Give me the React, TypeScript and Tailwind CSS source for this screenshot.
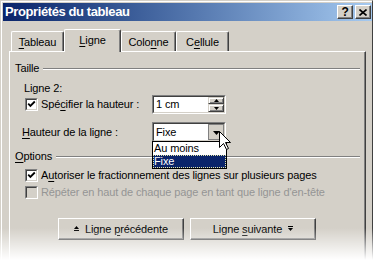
import type { ReactNode } from "react";

function U({ children }: { children: ReactNode }) {
  return <span className="underline decoration-1 underline-offset-[2px]">{children}</span>;
}

function Checkbox({ checked, disabled }: { checked?: boolean; disabled?: boolean }) {
  return (
    <div className="h-[13px] w-[13px] shrink-0 border border-t-[#808080] border-l-[#808080] border-b-white border-r-white">
      <div className={`h-full w-full border border-t-[#404040] border-l-[#404040] border-b-[#d4d0c8] border-r-[#d4d0c8] ${disabled ? "bg-[#d4d0c8]" : "bg-white"}`}>
        {checked && (
          <svg width="9" height="9" viewBox="0 0 9 9" className="block">
            <path d="M1.2 3.6 L3.4 5.9 L7.8 1.5" stroke="#000" strokeWidth="1.8" fill="none" />
          </svg>
        )}
      </div>
    </div>
  );
}

function Arrow({ up }: { up?: boolean }) {
  return (
    <svg width="5" height="3" viewBox="0 0 5 3" className="block">
      <path d={up ? "M2.5 0 L5 3 L0 3 Z" : "M0 0 L5 0 L2.5 3 Z"} fill="#000" />
    </svg>
  );
}

function GroupTitle({ children }: { children: ReactNode }) {
  return (
    <div className="flex h-[13px] items-center">
      <span className="leading-[13px]">{children}</span>
      <div className="ml-[4px] h-[2px] flex-1 border-t border-b border-t-[#808080] border-b-white" />
    </div>
  );
}

export default function App() {
  return (
    <div className="relative h-[260px] w-[375px] overflow-hidden bg-white font-['Liberation_Sans',Arial,sans-serif] text-[11px] leading-[13px] tracking-[-0.12px] text-black">
      <div className="h-[300px] w-[373px] border-t border-l border-r border-t-[#d4d0c8] border-l-[#d4d0c8] border-r-[#404040] bg-[#d4d0c8]">
        <div className="h-full border-t border-l border-white pt-px pl-px">
          {/* title bar */}
          <div className="flex h-[18px] items-center bg-linear-to-r from-[#0a246a] to-[#a6caf0] pr-px pl-[2px]">
            <span className="flex-1 text-[13px] leading-[14px] font-bold tracking-[-0.4px] text-white">Propriétés du tableau</span>
            <div className="flex h-[14px] w-[16px] items-center justify-center border border-t-white border-l-white border-b-[#404040] border-r-[#404040] bg-[#d4d0c8] shadow-[inset_-1px_-1px_0_#808080]">
              <span className="text-[12px] leading-[12px] font-bold">?</span>
            </div>
            <div className="ml-[2px] flex h-[14px] w-[16px] items-center justify-center border border-t-white border-l-white border-b-[#404040] border-r-[#404040] bg-[#d4d0c8] shadow-[inset_-1px_-1px_0_#808080]">
              <svg width="8" height="7" viewBox="0 0 8 7" className="block">
                <path d="M0.5 0.5 L7.5 6.5 M7.5 0.5 L0.5 6.5" stroke="#000" strokeWidth="1.6" />
              </svg>
            </div>
          </div>

          {/* body */}
          <div className="mr-[6px] ml-[6px] pt-[8px]">
            {/* tabs */}
            <div className="flex h-[22px] items-end pl-[2px]">
              <div className="flex h-[20px] w-[53px] justify-center rounded-t-[2px] border-t border-l border-r border-t-white border-l-white border-r-[#404040] pt-[4px] shadow-[inset_-1px_0_0_#808080]">
                <span><U>T</U>ableau</span>
              </div>
              <div className="relative z-10 -mb-px flex h-[23px] w-[57px] justify-center rounded-t-[2px] border-t border-l border-r border-t-white border-l-white border-r-[#404040] bg-[#d4d0c8] pt-[4px] shadow-[inset_-1px_0_0_#808080]">
                <span><U>L</U>igne</span>
              </div>
              <div className="flex h-[20px] w-[55px] justify-center rounded-t-[2px] border-t border-l border-r border-t-white border-l-white border-r-[#404040] pt-[4px] shadow-[inset_-1px_0_0_#808080]">
                <span>Colo<U>n</U>ne</span>
              </div>
              <div className="flex h-[20px] w-[53px] justify-center rounded-t-[2px] border-t border-l border-r border-t-white border-l-white border-r-[#404040] pt-[4px] shadow-[inset_-1px_0_0_#808080]">
                <span>C<U>e</U>llule</span>
              </div>
            </div>

            {/* panel */}
            <div className="h-[240px] border-t border-l border-r border-t-white border-l-white border-r-[#404040] pr-[5px] pl-[5px] shadow-[inset_-1px_0_0_#808080]">
              <div className="pt-[10px]">
                <GroupTitle>Taille</GroupTitle>
              </div>
              <div className="mt-[7px] ml-[9px] h-[13px]">Ligne 2:</div>

              <div className="ml-[10px] flex h-[19px] items-center">
                <div className="flex w-[127px] items-center gap-[3px]">
                  <Checkbox checked />
                  <span>Spé<U>c</U>ifier la hauteur :</span>
                </div>
                <div className="h-[19px] w-[74px] border border-t-[#808080] border-l-[#808080] border-b-white border-r-white">
                  <div className="flex h-full border border-t-[#404040] border-l-[#404040] border-b-[#d4d0c8] border-r-[#d4d0c8] bg-white">
                    <span className="flex flex-1 items-center pl-[2px]">1 cm</span>
                    <div className="flex w-[16px] flex-col">
                      <div className="flex h-[7px] items-center justify-center border border-t-[#d4d0c8] border-l-[#d4d0c8] border-b-[#404040] border-r-[#404040] bg-[#d4d0c8] shadow-[inset_1px_1px_0_#fff,inset_-1px_-1px_0_#808080]">
                        <Arrow up />
                      </div>
                      <div className="flex h-[8px] items-center justify-center border border-t-[#d4d0c8] border-l-[#d4d0c8] border-b-[#404040] border-r-[#404040] bg-[#d4d0c8] shadow-[inset_1px_1px_0_#fff,inset_-1px_-1px_0_#808080]">
                        <Arrow />
                      </div>
                    </div>
                  </div>
                </div>
              </div>

              <div className="mt-[8px] ml-[7px] flex h-[20px] items-center">
                <span className="w-[130px]"><U>H</U>auteur de la ligne :</span>
                <div className="relative h-[20px] w-[74px] border border-t-[#808080] border-l-[#808080] border-b-white border-r-white">
                  <div className="flex h-full border border-t-[#404040] border-l-[#404040] border-b-[#d4d0c8] border-r-[#d4d0c8] bg-white">
                    <span className="flex flex-1 items-center pl-[2px]">Fixe</span>
                    <div className="flex w-[16px] items-center justify-center border border-[#808080] bg-[#d4d0c8] pt-px pl-px">
                      <svg width="7" height="4" viewBox="0 0 7 4" className="block">
                        <path d="M0 0 L7 0 L3.5 4 Z" fill="#000" />
                      </svg>
                    </div>
                  </div>
                  {/* open list */}
                  <div className="absolute top-full -left-px z-20 w-[75px] border border-black bg-white">
                    <div className="h-[13px] pl-px leading-[13px]">Au moins</div>
                    <div className="h-[13px] border border-dotted border-[#e8e8a8] bg-[#0a246a] leading-[11px] text-white">Fixe</div>
                  </div>
                </div>
              </div>

              <div className="mt-[8px]">
                <GroupTitle><U>O</U>ptions</GroupTitle>
              </div>
              <div className="mt-[6px] ml-[10px] flex h-[13px] items-center gap-[3px]">
                <Checkbox checked />
                <span>A<U>u</U>toriser le fractionnement des lignes sur plusieurs pages</span>
              </div>
              <div className="mt-[4px] ml-[10px] flex h-[13px] items-center gap-[3px]">
                <Checkbox disabled />
                <span className="text-[#959595]">Répéter en haut de chaque page en tant que ligne d'en-tête</span>
              </div>

              <div className="mt-[19px] ml-[43px] flex gap-[6px]">
                <div className="flex h-[22px] w-[126px] items-center justify-center gap-[6px] border border-t-white border-l-white border-b-[#404040] border-r-[#404040] shadow-[inset_-1px_-1px_0_#808080]">
                  <svg width="5" height="6" viewBox="0 0 5 6" className="block">
                    <path d="M2.5 0 L5 3 L0 3 Z" fill="#000" />
                    <rect x="0" y="4" width="5" height="1" fill="#000" />
                  </svg>
                  <span>Ligne <U>p</U>récédente</span>
                </div>
                <div className="flex h-[22px] w-[126px] items-center justify-center gap-[6px] border border-t-white border-l-white border-b-[#404040] border-r-[#404040] shadow-[inset_-1px_-1px_0_#808080]">
                  <span>Ligne <U>s</U>uivante</span>
                  <svg width="5" height="6" viewBox="0 0 5 6" className="block">
                    <rect x="0" y="0" width="5" height="1" fill="#000" />
                    <path d="M0 2 L5 2 L2.5 5 Z" fill="#000" />
                  </svg>
                </div>
              </div>
            </div>
          </div>
        </div>
      </div>

      {/* mouse pointer */}
      <svg width="13" height="20" viewBox="0 0 13 20" className="absolute top-[131px] left-[219px] z-30">
        <path d="M0.5 0.5 L0.5 16.5 L4.5 12.5 L7.5 18.5 L9.5 17.5 L6.5 11.5 L11.5 11.5 Z" fill="#fff" stroke="#000" strokeWidth="1" />
      </svg>

      {/* fade out */}
      <div className="absolute top-[228px] right-0 left-0 z-40 h-[32px] bg-linear-to-b from-transparent to-white" />
    </div>
  );
}
